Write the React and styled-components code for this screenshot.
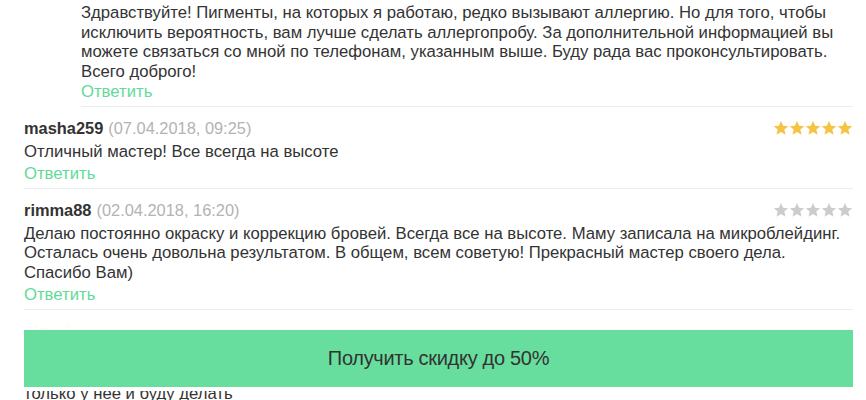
import React from "react";
import styled, { createGlobalStyle } from "styled-components";

const Global = createGlobalStyle`
  html, body { margin: 0; padding: 0; background: #fff; }
  body { font-family: "Liberation Sans", Arial, sans-serif; color: #333; overflow: hidden; }
`;

const Page = styled.div`
  padding: 3px 13px 0 24px;
  height: 400px;
  box-sizing: border-box;
  overflow: hidden;
`;

const Block = styled.div`
  margin-left: ${(p) => (p.$reply ? "57px" : "0")};
  padding-top: ${(p) => (p.$reply ? "0" : "11px")};
  padding-bottom: 4px;
  border-bottom: 1px solid #ececec;
`;

const Header = styled.div`
  display: flex;
  align-items: center;
  justify-content: space-between;
  height: 20px;
  margin-bottom: 4px;
  font-size: 16.4px;
  line-height: 20px;
`;

const Name = styled.span`
  font-weight: bold;
  color: #333;
`;

const DateText = styled.span`
  color: #b3b3b3;
  margin-left: 5px;
`;

const Text = styled.p`
  margin: 0;
  font-size: 16.7px;
  line-height: 19.5px;
  color: #333;
`;

const Reply = styled.a`
  display: block;
  margin-top: ${(p) => p.$gap}px;
  font-size: 16.7px;
  line-height: 19.5px;
  color: #5fdb98;
  text-decoration: none;
`;

const Stars = styled.div`
  display: flex;
`;

const Star = ({ color }) => (
  <svg width="16" height="16" viewBox="0 0 24 24">
    <path
      d="M12 1.5l3.1 7.1 7.7.7-5.8 5.1 1.8 7.6L12 18l-6.8 4 1.8-7.6-5.8-5.1 7.7-.7z"
      fill={color}
    />
  </svg>
);

const Rating = ({ value }) => (
  <Stars>
    {[0, 1, 2, 3, 4].map((i) => (
      <Star key={i} color={i < value ? "#f6c244" : "#cccccc"} />
    ))}
  </Stars>
);

const Dock = styled.div`
  position: fixed;
  left: 0;
  right: 0;
  bottom: 9px;
  padding: 20px 13px 4px 24px;
  background: linear-gradient(rgba(255, 255, 255, 0.94), #fff 30%);
`;

const CTA = styled.button`
  display: block;
  width: 100%;
  height: 57px;
  border: none;
  background: #67de9e;
  color: #333;
  font-family: "Liberation Sans", Arial, sans-serif;
  font-size: 20px;
  letter-spacing: -0.3px;
  cursor: pointer;
`;

const comments = [
  {
    name: "masha259",
    date: "(07.04.2018, 09:25)",
    rating: 5,
    text: "Отличный мастер! Все всегда на высоте",
  },
  {
    name: "rimma88",
    date: "(02.04.2018, 16:20)",
    rating: 0,
    text:
      "Делаю постоянно окраску и коррекцию бровей. Всегда все на высоте. Маму записала на микроблейдинг. Осталась очень довольна результатом. В общем, всем советую! Прекрасный мастер своего дела. Спасибо Вам)",
  },
  {
    name: "olga_k",
    date: "(28.03.2018, 11:04)",
    rating: 5,
    text:
      "Хожу к мастеру уже больше года, всегда аккуратно, быстро и качественно. Очень приятная атмосфера и доброжелательное отношение.",
    extra: "только у нее и буду делать",
  },
];

export default function App() {
  return (
    <>
      <Global />
      <Page>
        <Block $reply>
          <Text>
            Здравствуйте! Пигменты, на которых я работаю, редко вызывают аллергию. Но для того, чтобы
            исключить вероятность, вам лучше сделать аллергопробу. За дополнительной информацией вы
            можете связаться со мной по телефонам, указанным выше. Буду рада вас проконсультировать.
            Всего доброго!
          </Text>
          <Reply href="#" $gap={1}>Ответить</Reply>
        </Block>
        {comments.map((c) => (
          <Block key={c.name}>
            <Header>
              <div>
                <Name>{c.name}</Name>
                <DateText>{c.date}</DateText>
              </div>
              <Rating value={c.rating} />
            </Header>
            <Text>{c.text}</Text>
            {c.extra && <Text>{c.extra}</Text>}
            <Reply href="#" $gap={3}>Ответить</Reply>
          </Block>
        ))}
      </Page>
      <Dock>
        <CTA>Получить скидку до 50%</CTA>
      </Dock>
    </>
  );
}
